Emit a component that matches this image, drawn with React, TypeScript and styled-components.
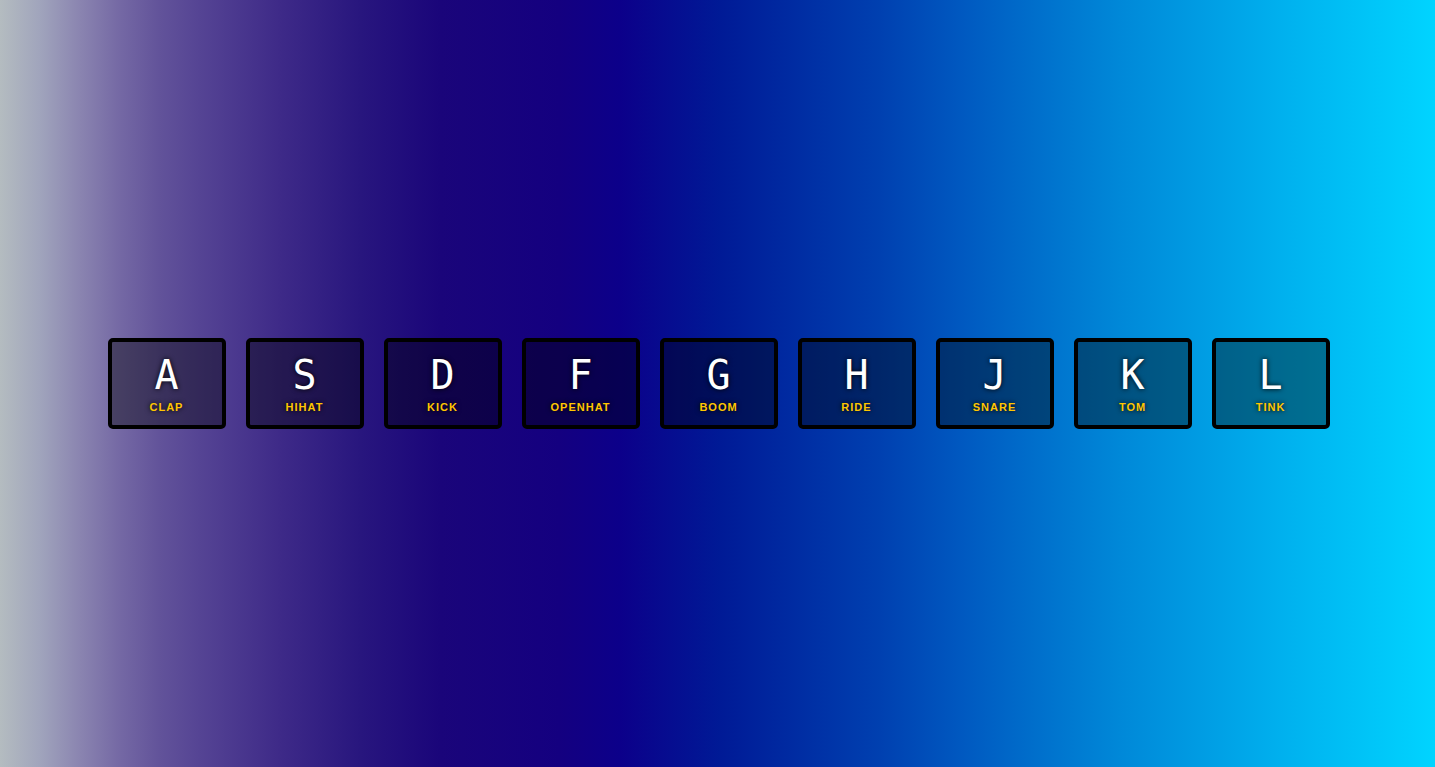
import React from "react";
import styled, { createGlobalStyle } from "styled-components";

const GlobalStyle = createGlobalStyle`
  html, body {
    margin: 0;
    padding: 0;
    height: 100%;
  }
  body {
    font-family: "Liberation Sans", Arial, sans-serif;
    background: linear-gradient(
      to right,
      #b4bcc0 0%,
      #a0a4bc 2.8%,
      #8a84b0 5.6%,
      #7468a4 8.4%,
      #62539a 11.1%,
      #554494 13.9%,
      #3e2a88 19.5%,
      #28167e 25.1%,
      #1a057a 30.7%,
      #140080 39%,
      #0c008a 43.2%,
      #001a96 50.2%,
      #0040b0 61.3%,
      #0058c0 66.9%,
      #0088d8 78%,
      #00b0ee 89.2%,
      #00d4ff 100%
    );
  }
`;

const Page = styled.main`
  box-sizing: border-box;
  min-height: 100vh;
  padding-left: 2px;
  display: flex;
  align-items: center;
  justify-content: center;
`;

const Keys = styled.div`
  display: flex;
  gap: 20px;
  align-items: center;
  justify-content: center;
`;

const Key = styled.div`
  box-sizing: border-box;
  width: 118px;
  border: 4px solid #000;
  border-radius: 5px;
  padding: 13px 5px 12px;
  text-align: center;
  color: #fff;
  background: rgba(0, 0, 0, 0.4);
  text-shadow: 0 0 5px #000;
`;

const Kbd = styled.kbd`
  display: block;
  font-family: "DejaVu Sans Mono", monospace;
  font-size: 40px;
  line-height: 40px;
`;

const Sound = styled.span`
  display: block;
  margin-top: 6px;
  font-family: "Liberation Sans", Arial, sans-serif;
  font-weight: bold;
  font-size: 11px;
  letter-spacing: 1px;
  text-transform: uppercase;
  color: #ffc600;
`;

const keys: [string, string][] = [
  ["A", "clap"],
  ["S", "hihat"],
  ["D", "kick"],
  ["F", "openhat"],
  ["G", "boom"],
  ["H", "ride"],
  ["J", "snare"],
  ["K", "tom"],
  ["L", "tink"],
];

export default function App() {
  return (
    <>
      <GlobalStyle />
      <Page>
        <Keys>
          {keys.map(([k, s]) => (
            <Key key={k}>
              <Kbd>{k}</Kbd>
              <Sound>{s}</Sound>
            </Key>
          ))}
        </Keys>
      </Page>
    </>
  );
}
